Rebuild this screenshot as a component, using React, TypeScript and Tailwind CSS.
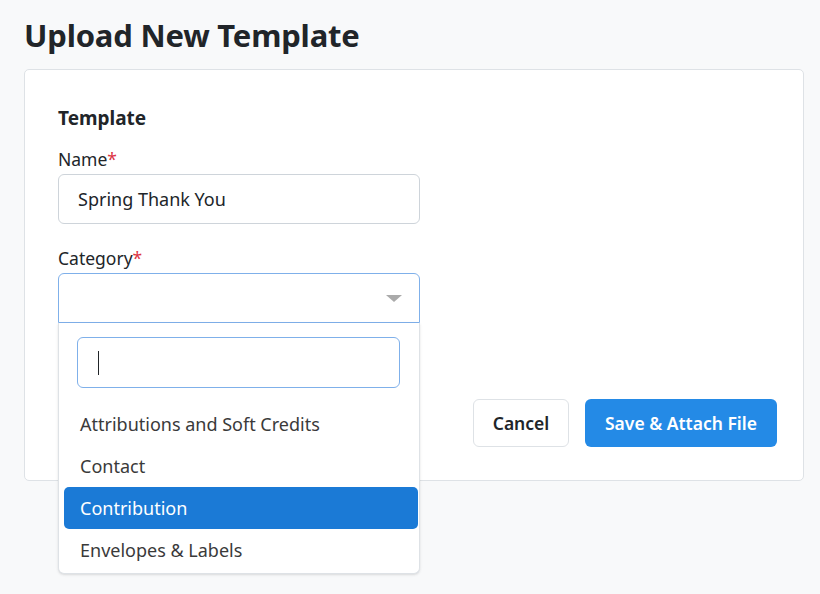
import { useState } from "react";

const options = ["Attributions and Soft Credits", "Contact", "Contribution", "Envelopes & Labels"];

export default function App() {
  const [name, setName] = useState("Spring Thank You");
  const [active] = useState("Contribution");

  return (
    <div className="min-h-[594px] bg-[#f8f9fa] pl-6 pr-4 pt-[14px] font-['Noto_Sans',sans-serif] text-[#212529]">
      <h1 className="text-[31px] font-bold leading-[42px] tracking-[-0.2px]">Upload New Template</h1>

      <div className="mt-[13px] rounded-[5px] border border-[#dee2e6] bg-white pl-[33px] pr-[26px] pt-[33px] pb-[33px]">
        <h2 className="text-[19px] font-bold leading-[30px]">Template</h2>

        <div className="mt-[13px] w-[362px]">
          <label className="block text-[17.5px] leading-[26px]">
            Name<span className="text-[#dc3545]">*</span>
          </label>
          <input
            value={name}
            onChange={e => setName(e.target.value)}
            className="mt-[2px] block h-[50px] w-full rounded-[6px] border border-[#ced4da] px-[19px] text-[18px] text-[#212529] outline-none"
          />
        </div>

        <div className="relative mt-[21px] w-[362px]">
          <label className="block text-[17.5px] leading-[26px]">
            Category<span className="text-[#dc3545]">*</span>
          </label>
          <div className="relative mt-[2px] h-[50px] rounded-t-[6px] border border-[#7fb0ea] bg-white">
            <span className="absolute right-[17px] top-[21px] h-0 w-0 border-x-[8px] border-t-[7px] border-x-transparent border-t-[#aaaaaa]" />
          </div>

          <div className="absolute left-0 right-0 top-[78px] z-10 rounded-b-[6px] border border-t-0 border-[#dee2e6] bg-white pl-[5px] pr-[1px] pt-[14px] pb-[2px] shadow-sm">
            <div className="ml-[13px] mr-[18px] flex h-[51px] items-center rounded-[6px] border border-[#7fb0ea] px-[20px]">
              <span className="h-[24px] w-px bg-[#212529]" />
            </div>
            <ul className="mt-[15px]">
              {options.map(o => (
                <li
                  key={o}
                  className={
                    o === active
                      ? "flex h-[42px] items-center rounded-[5px] bg-[#1b7ad6] px-[16px] text-[18px] text-white"
                      : "flex h-[42px] items-center px-[16px] text-[18px] text-[#3a3a3a]"
                  }
                >
                  {o}
                </li>
              ))}
            </ul>
          </div>
        </div>

        <div className="mt-[76px] flex justify-end gap-[16px]">
          <button className="h-[48px] w-[96px] rounded-[6px] border border-[#dee2e6] bg-white text-[17.5px] font-semibold text-[#212529]">
            Cancel
          </button>
          <button className="h-[48px] w-[192px] rounded-[6px] bg-[#248ae6] text-[17.5px] font-semibold text-white">
            Save &amp; Attach File
          </button>
        </div>
      </div>
    </div>
  );
}
